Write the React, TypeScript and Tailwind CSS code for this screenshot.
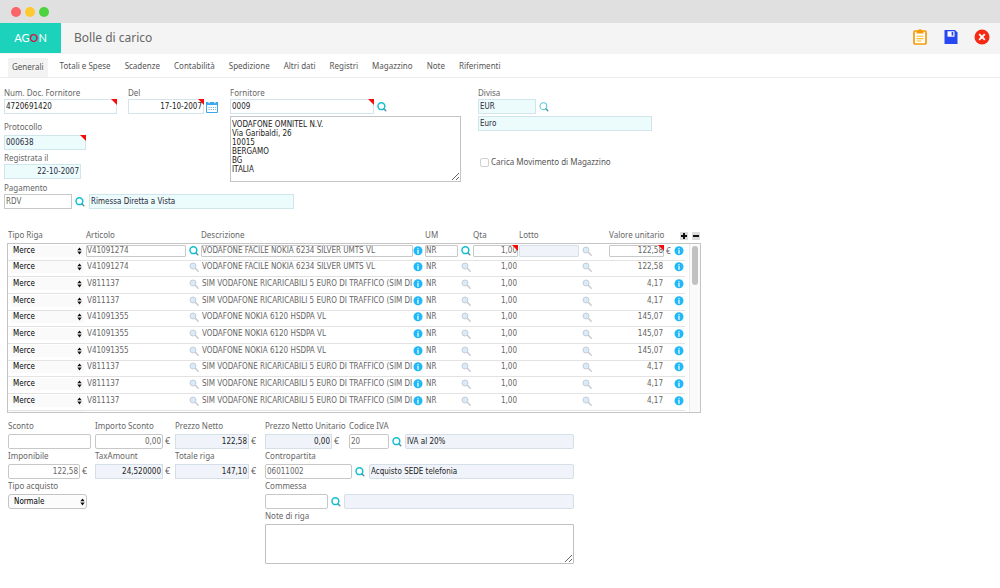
import type { InputHTMLAttributes, ReactNode } from "react";

const cx = (...parts: (string | false | undefined)[]) => parts.filter(Boolean).join(" ");

const valueFont = "font-['DejaVu_Sans_Condensed','DejaVu_Sans',sans-serif] text-[8px]";

function SearchIcon({ tone = "strong" }: { tone?: "strong" | "soft" | "muted" }) {
  if (tone === "muted") {
    return (
      <svg viewBox="0 0 10 10" className="block size-[10px]" fill="none">
        <path d="M6.4 6.4 9.2 9.2" stroke="#c9ccd2" strokeWidth="1.5" strokeLinecap="round" />
        <circle cx="4" cy="4" r="3" fill="#d9ebf8" stroke="#c6ced8" strokeWidth="1" />
      </svg>
    );
  }
  const ring = tone === "strong" ? "#10bfd2" : "#5cc9d6";
  return (
    <svg viewBox="0 0 10 10" className="block size-[10px]" fill="none">
      <path d="M6.8 6.8 8.8 8.8" stroke="#5b8f9c" strokeWidth="1.4" strokeLinecap="round" />
      <circle cx="4.4" cy="4.2" r="3.4" stroke={ring} strokeWidth={tone === "strong" ? 1.5 : 1.1} />
    </svg>
  );
}

function SearchButton({ label, tone, disabled }: { label: string; tone?: "strong" | "soft" | "muted"; disabled?: boolean }) {
  return (
    <button type="button" aria-label={label} disabled={disabled} className="block size-[10px] shrink-0">
      <SearchIcon tone={tone} />
    </button>
  );
}

function InfoButton() {
  return (
    <button type="button" aria-label="Info" className="block size-[10px]">
      <svg viewBox="0 0 10 10" className="block size-[10px]">
        <circle cx="5" cy="4.8" r="4.5" fill="#1fb8f8" />
        <circle cx="5" cy="2.8" r="0.7" fill="#fff" />
        <path d="M4.3 4.1h1.300v2.900H6v.6H4v-.6h.4V4.700h-.1z" fill="#fff" />
      </svg>
    </button>
  );
}

function Corner() {
  return (
    <svg viewBox="0 0 6 6" className="pointer-events-none absolute top-0 right-0 size-[6px]">
      <path d="M0 0H6V6Z" fill="#f40b0b" />
    </svg>
  );
}

type Tone = "plain" | "aqua" | "grey" | "blue" | "bare";

const tones: Record<Tone, string> = {
  plain: "border-[#d3e4ef] bg-white text-[#222]",
  aqua: "border-[#d0e6ec] bg-[#ecfbfc] text-[#2a2a3a]",
  grey: "border-[#c8c8c8] bg-white text-[#666]",
  blue: "border-[#d5dfe8] bg-[#f0f4fa] text-[#222]",
  bare: "border-transparent bg-transparent text-[#666]",
};

interface BoxProps extends InputHTMLAttributes<HTMLInputElement> {
  tone?: Tone;
  width: string;
  cell?: boolean;
  right?: boolean;
  required?: boolean;
}

function Box({ tone = "plain", width, cell, right, required, className, ...rest }: BoxProps) {
  return (
    <span className={cx("relative block shrink-0", width)}>
      <input
        type="text"
        className={cx(
          "block w-full border outline-none",
          cell ? "h-[12px] rounded-[1px] px-0" : "h-[15px] px-px",
          valueFont,
          tones[tone],
          right && "text-right",
          className,
        )}
        {...rest}
      />
      {required && <Corner />}
    </span>
  );
}

function Label({ htmlFor, children }: { htmlFor: string; children: ReactNode }) {
  return (
    <label htmlFor={htmlFor} className="block h-[11px] text-[8px] leading-[9px] whitespace-nowrap text-[#666]">
      {children}
    </label>
  );
}

function Field({ id, label, tight, children }: { id: string; label: string; tight?: boolean; children: ReactNode }) {
  return (
    <div className={cx("flex flex-col", !tight && "gap-[2px]")}>
      <Label htmlFor={id}>{label}</Label>
      <div className="flex items-center">{children}</div>
    </div>
  );
}

function Euro() {
  return <span className="ml-[2px] self-start text-[9px] leading-[13px] text-[#666]">€</span>;
}

function Updown() {
  return (
    <svg viewBox="0 0 5 8" className="pointer-events-none col-start-1 row-start-1 mr-[2px] h-[8px] w-[5px] self-center justify-self-end">
      <path d="M2.5 0.4 4.7 3.3H.3zM2.5 7.4 4.7 4.5H.3z" fill="#111" />
    </svg>
  );
}

const tabs = ["Totali e Spese", "Scadenze", "Contabilità", "Spedizione", "Altri dati", "Registri", "Magazzino", "Note", "Riferimenti"];

const phone = "VODAFONE FACILE NOKIA 6234 SILVER UMTS VL";
const sim = "SIM VODAFONE RICARICABILI 5 EURO DI TRAFFICO (SIM DI";
const hsdpa = "VODAFONE NOKIA 6120 HSDPA VL";

const rows: [string, string, string][] = [
  ["V41091274", phone, "122,58"],
  ["V41091274", phone, "122,58"],
  ["V811137", sim, "4,17"],
  ["V811137", sim, "4,17"],
  ["V41091355", hsdpa, "145,07"],
  ["V41091355", hsdpa, "145,07"],
  ["V41091355", hsdpa, "145,07"],
  ["V811137", sim, "4,17"],
  ["V811137", sim, "4,17"],
  ["V811137", sim, "4,17"],
  ["V811137", sim, "4,17"],
  ["V811137", sim, "4,17"],
];

function Columns() {
  return (
    <colgroup>
      <col className="w-[78px]" />
      <col className="w-[103px]" />
      <col className="w-[12px]" />
      <col className="w-[212px]" />
      <col className="w-[12px]" />
      <col className="w-[36px]" />
      <col className="w-[12px]" />
      <col className="w-[46px]" />
      <col className="w-[63px]" />
      <col className="w-[27px]" />
      <col className="w-[57px]" />
      <col className="w-[8px]" />
      <col className="w-[11px]" />
    </colgroup>
  );
}

function Row({ code, text, price, active }: { code: string; text: string; price: string; active: boolean }) {
  const tone: Tone = active ? "grey" : "bare";
  const cell = "p-0 pb-[2px]";
  return (
    <tr className="border-b border-[#e3e3e3]">
      <td className={cell}>
        <div className="ml-[3px] grid w-[73px] bg-[#fafafa]">
          <select
            aria-label="Tipo Riga"
            className={cx("col-start-1 row-start-1 h-[12px] w-full appearance-none bg-transparent px-[2px] text-black", valueFont)}
          >
            <option>Merce</option>
          </select>
          <Updown />
        </div>
      </td>
      <td className={cell}><Box aria-label="Articolo" cell tone={tone} width="w-[100px]" defaultValue={code} /></td>
      <td className={cell}><SearchButton label="Cerca articolo" tone={active ? "strong" : "muted"} disabled={!active} /></td>
      <td className={cell}><Box aria-label="Descrizione" cell tone={tone} width="w-[212px]" defaultValue={text} /></td>
      <td className={cell}><InfoButton /></td>
      <td className={cell}><Box aria-label="UM" cell tone={tone} width="w-[33px]" defaultValue="NR" /></td>
      <td className={cell}><SearchButton label="Cerca UM" tone={active ? "strong" : "muted"} disabled={!active} /></td>
      <td className={cell}>
        <Box aria-label="Qta" cell tone={tone} width="w-[45px]" right required={active} className={active ? "text-[#222]" : ""} defaultValue="1,00" />
      </td>
      <td className={cell}>{active && <Box aria-label="Lotto" cell tone="blue" width="w-[60px]" readOnly />}</td>
      <td className={cell}><SearchButton label="Cerca lotto" tone="muted" disabled /></td>
      <td className={cell}>
        <Box aria-label="Valore unitario" cell tone={tone} width="w-[55px]" right required={active} className={active ? "text-[#222]" : ""} defaultValue={price} />
      </td>
      <td className="p-0 pb-[2px] text-[8px] leading-[11px] text-[#666]">{active && "€"}</td>
      <td className={cell}><InfoButton /></td>
    </tr>
  );
}

export default function App() {
  return (
    <div className="min-h-screen bg-white font-['Noto_Sans','Open_Sans',sans-serif] text-[8px] text-[#666]">
      <div className="flex h-[23px] items-center gap-[4px] bg-[#e0e0e0] px-[11px]">
        <span className="size-[10px] rounded-full bg-[#fb6468]" />
        <span className="size-[10px] rounded-full bg-[#fdc931]" />
        <span className="size-[10px] rounded-full bg-[#4dd240]" />
      </div>

      <header className="flex h-[31px] items-start bg-[#f4f4f4]">
        <a href="#" className="flex h-[30px] w-[61px] items-center justify-center bg-[#1cd2bb] font-['Lato',sans-serif] text-[11px] leading-[14px] text-white">
          AG<span className="font-bold text-[#c81e50]">O</span>N
        </a>
        <h1 className="ml-[13px] text-[12px] leading-[30px]">Bolle di carico</h1>
        <div className="mt-[5px] mr-[10px] ml-auto flex items-center gap-[15px]">
          <button type="button" aria-label="Appunti">
            <svg viewBox="0 0 16 18" className="block h-[18px] w-[16px]" fill="none">
              <rect x="2" y="3" width="12" height="13" rx="1" fill="#fff" stroke="#f59a0c" strokeWidth="1.7" />
              <path d="M4.5 2.6H6.2a1.9 1.9 0 0 1 3.6 0h1.7v3h-7z" fill="#f59a0c" />
              <path d="M4.6 8.2h6.8M4.6 10.6h6.8M4.6 13h4.6" stroke="#f8b81e" strokeWidth="1.1" />
            </svg>
          </button>
          <button type="button" aria-label="Salva">
            <svg viewBox="0 0 16 16" className="block size-[16px]">
              <path d="M1.5 1H12L14.500 3.500V15H1.500Z" fill="#2747f2" />
              <path d="M4.500 2.300h7v5.400h-7z" fill="#fff" />
              <path d="M8.600 3h1.700v3.600H8.600z" fill="#2747f2" />
            </svg>
          </button>
          <button type="button" aria-label="Chiudi">
            <svg viewBox="0 0 16 16" className="block size-[16px]">
              <circle cx="8" cy="8" r="7.500" fill="#f62a13" />
              <path d="M5.200 5.200 10.800 10.800M10.800 5.200 5.200 10.800" stroke="#fff" strokeWidth="1.900" />
            </svg>
          </button>
        </div>
      </header>

      <nav className="flex h-[24px] items-end gap-[14px] border-b border-[#ececec] pl-[8px] text-[8px] whitespace-nowrap text-[#555]">
        <a href="#" className="-mr-[2px] bg-[#f3f3f3] px-[4px] pb-[2px] leading-[17px]">Generali</a>
        {tabs.map((t) => (
          <a key={t} href="#" className="leading-[22px]">{t}</a>
        ))}
      </nav>

      <main>
        <section className="flex pt-[10px] pl-[4px]">
          <div className="flex w-[226px] flex-col">
            <div className="flex">
              <div className="w-[124px]">
                <Field id="num" label="Num. Doc. Fornitore" tight>
                  <Box id="num" width="w-[113px]" required defaultValue="4720691420" />
                </Field>
              </div>
              <Field id="del" label="Del" tight>
                <Box id="del" width="w-[76px]" right required defaultValue="17-10-2007" />
                <button type="button" aria-label="Calendario" className="ml-[2px]">
                  <svg viewBox="0 0 12 12" className="block size-[12px]">
                    <path d="M.5 1.500h11v10H.5z" fill="#fff" stroke="#3aa6ee" strokeWidth="1" />
                    <path d="M0 1h12v3H0z" fill="#3aa6ee" />
                    <path d="M2.500 0h1.200v2.200H2.500zM8.300 0h1.200v2.200H8.300z" fill="#fff" />
                    <path d="M2.500 6.500h7.500M2.500 8.500h7.500" stroke="#7fb0d2" strokeWidth="1" strokeDasharray="1.200 1" />
                  </svg>
                </button>
              </Field>
            </div>
            <div className="mt-[8px]">
              <Field id="prot" label="Protocollo">
                <Box id="prot" tone="aqua" width="w-[82px]" required defaultValue="000638" />
              </Field>
            </div>
            <div className="mt-[3px]">
              <Field id="reg" label="Registrata il" tight>
                <Box id="reg" tone="aqua" width="w-[77px]" right defaultValue="22-10-2007" />
              </Field>
            </div>
          </div>

          <div className="w-[248px]">
            <Field id="forn" label="Fornitore" tight>
              <Box id="forn" width="w-[144px]" required defaultValue="0009" />
              <span className="ml-[3px]"><SearchButton label="Cerca fornitore" /></span>
            </Field>
            <textarea
              aria-label="Indirizzo fornitore"
              className={cx("mt-[2px] block h-[66px] w-[231px] resize border border-[#c4c4c4] bg-white px-px py-[3px] leading-[9px] text-[#222] outline-none", valueFont)}
              defaultValue={"VODAFONE OMNITEL N.V.\nVia Garibaldi, 26\n10015\nBERGAMO\nBG\nITALIA"}
            />
          </div>

          <div>
            <Field id="div" label="Divisa" tight>
              <Box id="div" tone="aqua" width="w-[58px]" defaultValue="EUR" />
              <span className="ml-[3px]"><SearchButton label="Cerca divisa" tone="soft" /></span>
            </Field>
            <div className="mt-[2px]">
              <Box aria-label="Descrizione divisa" tone="aqua" width="w-[174px]" defaultValue="Euro" />
            </div>
            <label className="mt-[25px] ml-[2px] flex items-center gap-[2px] text-[8px] leading-[12px] text-[#555]">
              <input type="checkbox" className="size-[9px] appearance-none rounded-[2px] border border-[#d0d0d0] bg-white" />
              Carica Movimento di Magazzino
            </label>
          </div>
        </section>

        <section className="mt-px pl-[4px]">
          <Field id="pag" label="Pagamento" tight>
            <Box id="pag" tone="grey" width="w-[68px]" defaultValue="RDV" />
            <span className="mr-[4px] ml-[3px]"><SearchButton label="Cerca pagamento" /></span>
            <Box aria-label="Descrizione pagamento" tone="aqua" width="w-[205px]" defaultValue="Rimessa Diretta a Vista" />
          </Field>
        </section>

        <section className="mt-[20px] ml-[7px] w-[694px]">
          <div className="flex h-[14px] items-start">
            <table className="ml-px w-[677px] table-fixed border-collapse text-left text-[8px] leading-[12px]">
              <Columns />
              <thead>
                <tr className="whitespace-nowrap">
                  <th className="p-0 font-normal">Tipo Riga</th>
                  <th className="p-0 font-normal" colSpan={2}>Articolo</th>
                  <th className="p-0 font-normal" colSpan={2}>Descrizione</th>
                  <th className="p-0 font-normal" colSpan={2}>UM</th>
                  <th className="p-0 font-normal">Qta</th>
                  <th className="p-0 font-normal" colSpan={2}>Lotto</th>
                  <th className="p-0 font-normal" colSpan={3}>Valore unitario</th>
                </tr>
              </thead>
            </table>
            <div className="-ml-[5px] flex gap-[4px] pt-[3px]">
              {["M4 1v6M1 4h6", "M1 4h6"].map((d, i) => (
                <button key={d} type="button" aria-label={i ? "Rimuovi riga" : "Aggiungi riga"} className="bg-[#dcdcdc]">
                  <svg viewBox="0 0 8 8" className="block size-[8px]">
                    <path d={d} stroke="#111" strokeWidth="2" />
                  </svg>
                </button>
              ))}
            </div>
          </div>

          <div className="flex h-[170px] overflow-hidden border border-[#c4c4c4]">
            <table className="h-[200px] w-[677px] table-fixed border-collapse">
              <Columns />
              <tbody>
                {rows.map(([code, text, price], i) => (
                  <Row key={i} code={code} text={text} price={price} active={i === 0} />
                ))}
              </tbody>
            </table>
            <div className="ml-auto w-[11px] border-l border-[#ececec] bg-[#fafafa] px-[2px] pt-[2px]">
              <div className="h-[39px] rounded-full bg-[#c1c1c1]" />
            </div>
          </div>
        </section>

        <section className="mt-[8px] flex pb-[24px] pl-[8px]">
          <div className="grid w-[257px] grid-cols-[87px_80px_90px] content-start gap-y-[2px]">
            <Field id="sconto" label="Sconto"><Box id="sconto" tone="grey" width="w-[83px]" className="rounded-[2px]" /></Field>
            <Field id="impsc" label="Importo Sconto"><Box id="impsc" tone="grey" width="w-[68px]" right className="rounded-[2px]" defaultValue="0,00" /><Euro /></Field>
            <Field id="netto" label="Prezzo Netto"><Box id="netto" tone="blue" width="w-[74px]" right defaultValue="122,58" /><Euro /></Field>
            <Field id="impon" label="Imponibile"><Box id="impon" tone="grey" width="w-[72px]" right className="rounded-[2px]" defaultValue="122,58" /><Euro /></Field>
            <Field id="tax" label="TaxAmount"><Box id="tax" tone="blue" width="w-[68px]" right defaultValue="24,520000" /><Euro /></Field>
            <Field id="tot" label="Totale riga"><Box id="tot" tone="blue" width="w-[74px]" right defaultValue="147,10" /><Euro /></Field>
            <Field id="tipo" label="Tipo acquisto">
              <div className="grid w-[79px]">
                <select id="tipo" className={cx("col-start-1 row-start-1 h-[15px] w-full appearance-none rounded-[3px] border border-[#c4c4c4] bg-[#fcfcfc] px-[5px] text-black", valueFont)}>
                  <option>Normale</option>
                </select>
                <Updown />
              </div>
            </Field>
          </div>

          <div className="flex w-[309px] flex-col gap-[2px]">
            <div className="flex">
              <div className="w-[84px]">
                <Field id="nettou" label="Prezzo Netto Unitario"><Box id="nettou" tone="blue" width="w-[67px]" right defaultValue="0,00" /><Euro /></Field>
              </div>
              <Field id="iva" label="Codice IVA">
                <Box id="iva" tone="grey" width="w-[40px]" className="rounded-[2px]" defaultValue="20" />
                <span className="mx-[3px]"><SearchButton label="Cerca IVA" /></span>
                <Box aria-label="Descrizione IVA" tone="blue" width="w-[169px]" className="rounded-[2px]" defaultValue="IVA al 20%" />
              </Field>
            </div>
            <Field id="contro" label="Contropartita">
              <Box id="contro" tone="grey" width="w-[87px]" className="rounded-[2px]" defaultValue="06011002" />
              <span className="mr-[4px] ml-[3px]"><SearchButton label="Cerca contropartita" /></span>
              <Box aria-label="Descrizione contropartita" tone="blue" width="w-[205px]" className="rounded-[2px]" defaultValue="Acquisto SEDE telefonia" />
            </Field>
            <Field id="comm" label="Commessa">
              <Box id="comm" tone="grey" width="w-[63px]" className="rounded-[2px]" />
              <span className="mx-[3px]"><SearchButton label="Cerca commessa" /></span>
              <Box aria-label="Descrizione commessa" tone="blue" width="w-[230px]" className="rounded-[2px]" />
            </Field>
            <Field id="note" label="Note di riga">
              <textarea id="note" className={cx("block h-[40px] w-full resize rounded-[1px] border border-[#c0c0c0] bg-white p-px outline-none", valueFont)} />
            </Field>
          </div>
        </section>
      </main>
    </div>
  );
}
